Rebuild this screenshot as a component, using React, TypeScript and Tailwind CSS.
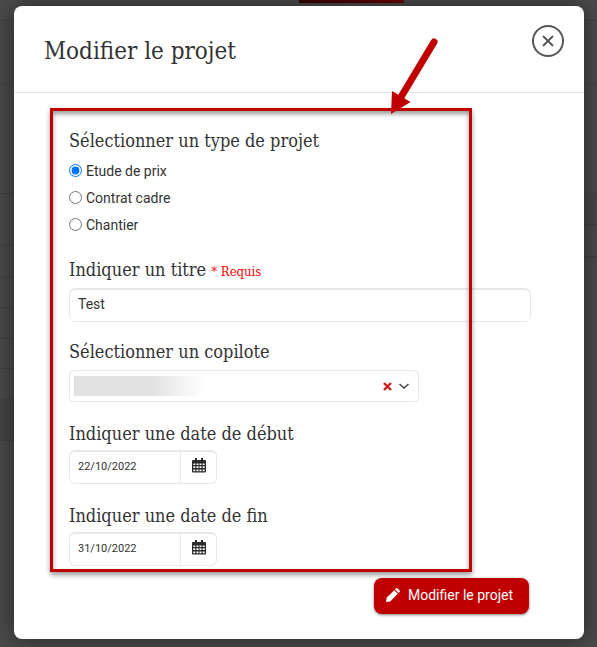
import { useState } from "react";
import type { ReactNode } from "react";

const PROJECT_TYPES = ["Etude de prix", "Contrat cadre", "Chantier"];

const SLAB = "font-['Roboto_Slab','DejaVu_Serif_Condensed','DejaVu_Serif',serif]";

const FieldLabel = ({ htmlFor, children }: { htmlFor: string; children: ReactNode }) => (
  <label htmlFor={htmlFor} className={`${SLAB} block text-lg leading-6`}>
    {children}
  </label>
);

const CalendarIcon = () => (
  <svg width="14" height="15" viewBox="0 0 14 15">
    <path
      fill="#2b2b2b"
      fillRule="evenodd"
      d="M3 0h2v2h4V0h2v2h2q1 0 1 1v10.500q0 1-1 1H1q-1 0-1-1V3q0-1 1-1h2zM1.300 5.500v1.500h2V5.500zM4.500 5.500v1.500h2V5.500zM7.500 5.500v1.500h2V5.500zM10.700 5.500v1.500h2V5.500zM1.300 8.300v1.800h2V8.300zM4.500 8.300v1.800h2V8.300zM7.500 8.300v1.800h2V8.300zM10.700 8.300v1.800h2V8.300zM1.300 11.400v1.800h2v-1.800zM4.500 11.400v1.800h2v-1.800zM7.500 11.400v1.800h2v-1.800zM10.700 11.400v1.800h2v-1.800z"
    />
  </svg>
);

const DateField = ({ id, label, value }: { id: string; label: string; value: string }) => (
  <div>
    <FieldLabel htmlFor={id}>{label}</FieldLabel>
    <div className="mt-1 flex h-[34px] w-[148px] rounded-md border border-t-2 border-[#e8e8e8]">
      <input
        id={id}
        defaultValue={value}
        className="w-[111px] border-r border-[#e8e8e8] px-2 pb-0.5 text-[11px] outline-none"
      />
      <button type="button" aria-label="Ouvrir le calendrier" className="flex flex-1 items-center justify-center pb-1">
        <CalendarIcon />
      </button>
    </div>
  </div>
);

// dimmed page behind the dialog
const Backdrop = () => (
  <div aria-hidden="true" className="absolute inset-0 overflow-hidden bg-[#4b4b4b]">
    <div className="h-[21px] border-b border-[#424242]">
      <div className="ml-[50%] flex h-[3px] w-[105px] items-end justify-end overflow-hidden bg-linear-to-r from-[#350000] to-[#6b0000] pr-1.5">
        <span className="text-[10px] leading-3 font-bold tracking-wider text-[#8a6a6a]">PRODUCTION</span>
      </div>
    </div>
    <div className="h-[63px] border-b border-[#444]" />
    <div className="grid grid-cols-2">
      <div>
        <div className="h-[110px] border-b border-[#424242]" />
        <div className="h-[52px] border-b-2 border-[#444]" />
        <div className="h-8 border-b-2 border-[#444]" />
        <div className="h-[30px] border-b border-[#424242]" />
        <div className="h-[31px] border-b border-[#424242]" />
        <div className="h-[30px] border-b border-[#424242]" />
        <div className="h-[30px]" />
        <div className="h-[42px] border-b border-[#404040] bg-[#454545]" />
      </div>
      <div>
        <div className="h-[110px] border-b border-[#444]" />
        <div className="h-8 border-b-2 border-[#424242] bg-[#474747]" />
        <div className="h-8 border-b-2 border-[#424242]" />
      </div>
    </div>
  </div>
);

const Annotation = () => (
  <div className="pointer-events-none absolute top-[15px] left-9 h-[464px] w-[422px] border-3 border-[#c00000] shadow-[0_3px_5px_rgba(0,0,0,0.4),inset_0_3px_5px_rgba(0,0,0,0.4)]">
    <svg className="absolute -top-[75px] right-7 h-20 w-[54px]" viewBox="0 0 54 80">
      <path d="M47 6 14 61" stroke="#c00000" strokeWidth="7" strokeLinecap="round" />
      <path d="M4 78 5 55 23.500 66Z" fill="#c00000" />
    </svg>
  </div>
);

const App = () => {
  const [type, setType] = useState(PROJECT_TYPES[0]);

  return (
    <div className="relative min-h-screen bg-[#4b4b4b] pt-1.5 pr-[13px] pb-2 pl-3.5 font-[Roboto,sans-serif] text-sm text-[#333]">
      <Backdrop />
      <main
        role="dialog"
        aria-labelledby="dialog-title"
        className="relative rounded-lg bg-white shadow-[0_0_24px_rgba(0,0,0,0.5)]"
      >
        <header className="flex items-start justify-between border-b border-[#e5e5e5] pt-[19px] pr-5 pb-[23px] pl-[30px]">
          <h1 id="dialog-title" className={`${SLAB} pt-2 text-2xl leading-9`}>
            Modifier le projet
          </h1>
          <button
            type="button"
            aria-label="Fermer"
            className="flex size-8 items-center justify-center rounded-full border-2 border-[#555]"
          >
            <svg width="12" height="12" viewBox="0 0 12 12" stroke="#555" strokeWidth="1.8">
              <path d="M1 1l10 10M11 1 1 11" />
            </svg>
          </button>
        </header>

        <form className="relative pt-9 pr-[53px] pb-[25px] pl-[55px]">
          <fieldset>
            <legend className={`${SLAB} text-lg leading-6`}>Sélectionner un type de projet</legend>
            <div className="pt-1">
              {PROJECT_TYPES.map((item) => (
                <label key={item} className="flex h-[27px] items-center gap-1">
                  <input
                    type="radio"
                    name="type"
                    checked={type === item}
                    onChange={() => setType(item)}
                    className="size-[13px] accent-[#0075ff]"
                  />
                  {item}
                </label>
              ))}
            </div>
          </fieldset>

          <div className="mt-5">
            <FieldLabel htmlFor="title">
              Indiquer un titre <span className="text-[13px] text-[#f00]">* Requis</span>
            </FieldLabel>
            <input
              id="title"
              defaultValue="Test"
              className="mt-1 block h-[34px] w-full rounded-md border border-t-2 border-[#e8e8e8] px-2 pb-1 outline-none"
            />
          </div>

          <div className="mt-[18px]">
            <FieldLabel htmlFor="copilot">Sélectionner un copilote</FieldLabel>
            <div className="mt-1.5 flex h-8 w-[350px] max-w-full items-center rounded-sm border border-[#e8e8e8] pr-2 pl-1">
              <select
                id="copilot"
                className="h-5 w-[130px] appearance-none bg-linear-to-r from-[#e2e2e2] from-60% to-white outline-none"
              />
              <button type="button" aria-label="Effacer" className="ml-auto">
                <svg width="9" height="9" viewBox="0 0 9 9" stroke="#c9201d" strokeWidth="2.4">
                  <path d="M1 1l7 7M8 1 1 8" />
                </svg>
              </button>
              <svg className="ml-1.5" width="12" height="8" viewBox="0 0 12 8" fill="none" stroke="#444" strokeWidth="1.5">
                <path d="M1.500 2 6 6l4.500-4" />
              </svg>
            </div>
          </div>

          <div className="mt-5 flex flex-col gap-5">
            <DateField id="start" label="Indiquer une date de début" value="22/10/2022" />
            <DateField id="end" label="Indiquer une date de fin" value="31/10/2022" />
          </div>

          <div className="mt-3 flex justify-end pr-0.5">
            <button
              type="submit"
              className="flex h-9 items-center gap-2 rounded-lg bg-[#c00000] pr-4 pb-0.5 pl-3 text-white shadow-[0_1px_3px_rgba(0,0,0,0.5)]"
            >
              <svg width="14" height="14" viewBox="0 0 14 14" fill="#fff">
                <path d="M0 14l.6-4.200 7.600-7.600 3.600 3.600-7.600 7.600zM9 1.400l.8-.8q1-1 2 0l1.600 1.600q1 1 0 2l-.8.800z" />
              </svg>
              Modifier le projet
            </button>
          </div>
          <Annotation />
        </form>
      </main>
    </div>
  );
};

export default App;
